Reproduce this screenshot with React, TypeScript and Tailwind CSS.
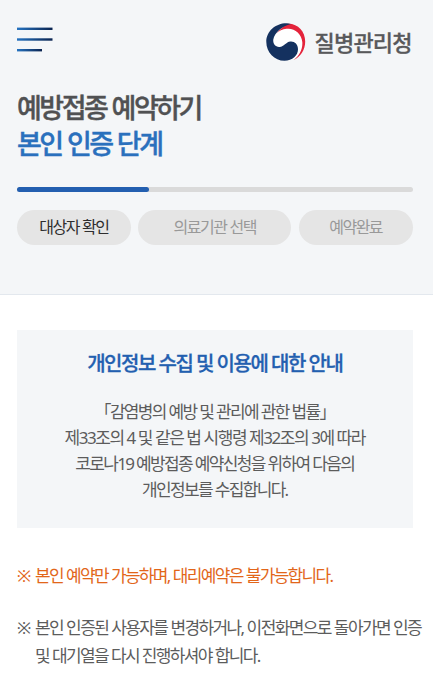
import React from "react";

function MenuIcon() {
  return (
    <button type="button" aria-label="메뉴" className="block h-[25px] w-9">
      <svg width="36" height="25" viewBox="0 0 36 25" aria-hidden="true">
        <defs>
          <linearGradient id="bar" x1="0" x2="1" y1="0" y2="0">
            <stop offset="0" stopColor="#2573c1" />
            <stop offset="1" stopColor="#0b2450" />
          </linearGradient>
        </defs>
        <rect x="0" y="0.6" width="35.5" height="2.4" fill="url(#bar)" />
        <rect x="0" y="11.3" width="35.5" height="2.4" fill="url(#bar)" />
        <rect x="0" y="22" width="25" height="2.4" fill="url(#bar)" />
      </svg>
    </button>
  );
}

function Emblem() {
  return (
    <svg width="40" height="38" viewBox="0 0 40 38" aria-hidden="true">
      <circle cx="19.5" cy="19" r="18.8" fill="#fff" />
      <path d="M20 1C31-.5 39.200 8 39.200 18.500 39.200 27 34.500 33.800 27.500 37 33.500 32.500 36.800 26 36.300 19 35.500 10.500 28.500 4.800 20.500 5.800 16.500 6.300 13 7.800 10 10.500Z" fill="#e4233b" />
      <path d="M25 .9C13-2 .3 6.500 .3 19 .3 29.500 8.500 37.800 18.500 37.800 26.500 37.800 32 32.500 32 26.300 32 21.300 28.600 18.300 24.500 18.600 19.500 19 18.300 24.300 13 24 9 23.700 6.800 20.300 7.300 16.500 8.500 9.500 16 3 25 .9Z" fill="#14315f" />
    </svg>
  );
}

export default function App() {
  return (
    <div className="h-[692px] w-[433px] overflow-hidden bg-white font-['Noto_Sans','Noto_Sans_CJK_KR',sans-serif] text-[#5c5c5c]">
      <header className="h-[295px] border-b border-[#e3e8ee] bg-[#f4f6f8] pr-[20.5px] pl-[17px] pt-[23px]">
        <div className="flex h-[38px] items-start justify-between">
          <div className="pt-1">
            <MenuIcon />
          </div>
          <div className="flex items-center">
            <Emblem />
            <span className="ml-[8.5px] w-[98px] whitespace-nowrap text-[22px] leading-[38px] font-medium tracking-[-0.8px] text-[#58595b] [-webkit-text-stroke:0.3px_currentColor]">질병관리청</span>
          </div>
        </div>
        <h1 className="mt-[29px] whitespace-nowrap text-[27px] leading-[36px] font-medium tracking-[-2.5px] text-[#505153] [word-spacing:0.7px] [-webkit-text-stroke:0.4px_currentColor]">
          예방접종 예약하기
          <span className="block text-[#2a70bd]">본인 인증 단계</span>
        </h1>
        <div className="mt-[25px] h-[5px] rounded-full bg-[#dadada]">
          <div className="h-full w-1/3 rounded-full bg-[#235fb0]" />
        </div>
        <ol className="mt-[18px] flex gap-[7.5px] text-center text-[16px] leading-[35px] tracking-[-1.5px] text-[#999] [word-spacing:0.3px]">
          <li className="w-[114px] rounded-full bg-[#e5e5e5] text-[#2e2e2e]">대상자 확인</li>
          <li className="w-[153.5px] rounded-full bg-[#e5e5e5]">의료기관 선택</li>
          <li className="w-[114px] rounded-full bg-[#e5e5e5]">예약완료</li>
        </ol>
      </header>
      <main className="pt-[35px]">
        <section className="mx-[17px] h-[198px] w-[395.5px] bg-[#f4f6f8] pt-[19px] text-center whitespace-nowrap">
          <h2 className="text-[20px] leading-[30px] font-medium tracking-[-1.5px] text-[#235fb0] [-webkit-text-stroke:0.3px_currentColor]">개인정보 수집 및 이용에 대한 안내</h2>
          <p className="mt-[20px] text-[17px] leading-[26px] tracking-[-1.65px]">
            「감염병의 예방 및 관리에 관한 법률」
            <br />
            <span className="tracking-[-1.45px]">제33조의 4 및 같은 법 시행령 제32조의 3에 따라</span>
            <br />
            코로나19 예방접종 예약신청을 위하여 다음의
            <br />
            개인정보를 수집합니다.
          </p>
        </section>
        <div className="pl-[17px] text-[17px] leading-[28px] tracking-[-1.65px] whitespace-nowrap [word-spacing:0.2px]">
          <p className="mt-[34px] flex text-[#e2661a]">
            <span className="w-[18px]">※</span>
            <span>본인 예약만 가능하며, 대리예약은 불가능합니다.</span>
          </p>
          <p className="mt-[24px] flex">
            <span className="w-[18px]">※</span>
            <span>
              <span className="tracking-[-1.6px]">본인 인증된 사용자를 변경하거나, 이전화면으로 돌아가면 인증</span>
              <br />및 대기열을 다시 진행하셔야 합니다.
            </span>
          </p>
        </div>
      </main>
    </div>
  );
}
